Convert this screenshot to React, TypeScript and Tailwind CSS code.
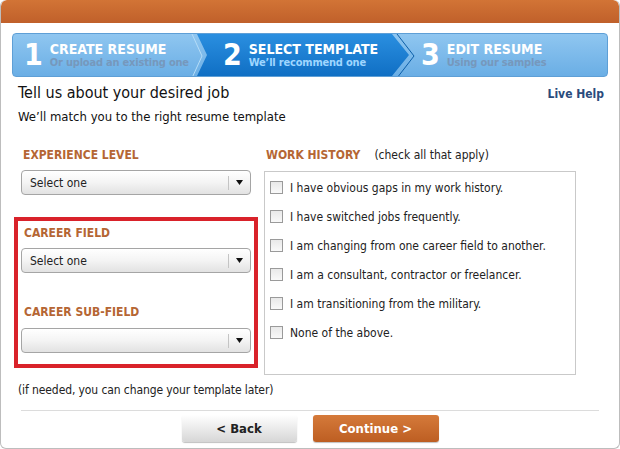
import React from 'react';

const FONT = 'font-["Tahoma","DejaVu_Sans_Condensed","DejaVu_Sans",sans-serif]';

const steps = [
  { n: '1', title: 'CREATE RESUME', sub: 'Or upload an existing one' },
  { n: '2', title: 'SELECT TEMPLATE', sub: 'We\u2019ll recommend one' },
  { n: '3', title: 'EDIT RESUME', sub: 'Using our samples' },
];

const workItems = [
  'I have obvious gaps in my work history.',
  'I have switched jobs frequently.',
  'I am changing from one career field to another.',
  'I am a consultant, contractor or freelancer.',
  'I am transitioning from the military.',
  'None of the above.',
];

const SelectBox: React.FC<{ value?: string }> = ({ value }) => (
  <div className="h-[25px] w-[230px] rounded-[4px] border border-[#a5a5a5] bg-gradient-to-b from-white via-[#f4f4f4] to-[#e2e2e2] flex items-center shadow-[inset_0_1px_0_#fff]">
    <span className="flex-1 pl-[8px] text-[12px] text-[#222] leading-none">{value}</span>
    <div className="w-px h-[14px] bg-[#c4c4c4]" />
    <div className="w-[21px] flex items-center justify-center">
      <svg width="7" height="5" viewBox="0 0 7 5">
        <path d="M0 0 H7 L3.5 5 Z" fill="#111" />
      </svg>
    </div>
  </div>
);

const Label: React.FC<{ children: React.ReactNode }> = ({ children }) => (
  <div className="text-[12px] font-bold text-[#b56634] leading-none pl-[2px] whitespace-nowrap">{children}</div>
);

const Step: React.FC<{ step: typeof steps[number]; active?: boolean }> = ({ step, active }) => (
  <div className="flex items-center gap-[7px] whitespace-nowrap">
    <span className="text-[30px] font-bold text-white leading-none">{step.n}</span>
    <div className="flex flex-col">
      <span className="text-[14px] font-bold text-white leading-[15px]">{step.title}</span>
      <span className={`text-[11px] font-bold leading-[12px] tracking-[-0.2px] ${active ? 'text-[#9fd6ff]' : 'text-[#7698bc]'}`}>{step.sub}</span>
    </div>
  </div>
);

export default function App() {
  return (
    <div className={`w-[620px] h-[449px] bg-white ${FONT} overflow-hidden`}>
      <div className="w-[620px] h-[449px] rounded-[6px] border-b border-x border-[#bdbdbd] flex flex-col overflow-hidden">
        <div className="h-[23px] shrink-0 bg-gradient-to-b from-[#d27436] to-[#c0602a] rounded-t-[6px]" />

        <div className="mx-[11px] mt-[10px] h-[44px] shrink-0 rounded-[4px] border border-[#5e9fd6] bg-gradient-to-b from-[#8fc6f0] to-[#6aaee5] flex relative overflow-hidden">
          <div className="w-[184px] pl-[11px] flex items-center">
            <Step step={steps[0]} />
          </div>
          <div className="w-[212px] -mr-[4px] pl-[26px] flex items-center bg-gradient-to-b from-[#2a8fe0] to-[#0f6fc4] [clip-path:polygon(0_0,195px_0,212px_50%,195px_100%,0_100%,10px_50%)]">
            <Step step={steps[1]} active />
          </div>
          <div className="flex-1 pl-[16px] flex items-center">
            <Step step={steps[2]} />
          </div>
          <svg className="absolute left-[178px] top-0" width="22" height="44" viewBox="0 0 22 44">
            <path d="M1 0 L11 22 L1 44" fill="none" stroke="#b5dcf7" strokeWidth="1" />
          </svg>
          <svg className="absolute left-[380px] top-0" width="22" height="44" viewBox="0 0 22 44">
            <path d="M4 0 L21 22 L4 44" fill="none" stroke="#0c5ea8" strokeWidth="1" />
          </svg>
        </div>

        <div className="px-[17px] pt-[6px] flex flex-col">
          <div className="flex items-start justify-between">
            <h1 className="text-[16px] text-[#111] leading-[20px]">Tell us about your desired job</h1>
            <a className="mt-[2px] mr-[-2px] text-[12px] font-bold text-[#2a4b7c]">Live Help</a>
          </div>
          <p className="mt-[5px] text-[13px] text-[#111] leading-[17px]">We’ll match you to the right resume template</p>

          <div className="mt-[24px] flex gap-[6px]">
            <div className="w-[244px] -ml-[4px] flex flex-col">
              <div className="pl-[7px]">
                <Label>EXPERIENCE LEVEL</Label>
                <div className="mt-[9px]">
                  <SelectBox value="Select one" />
                </div>
              </div>
              <div className="mt-[22px] h-[151px] border-[4px] border-[#d9222a] flex flex-col pl-[3px] pt-[6px]">
                <div className="pl-[1px]">
                  <Label>CAREER FIELD</Label>
                </div>
                <div className="mt-[9px]">
                  <SelectBox value="Select one" />
                </div>
                <div className="mt-[33px] pl-[1px]">
                  <Label>CAREER SUB-FIELD</Label>
                </div>
                <div className="mt-[10px]">
                  <SelectBox />
                </div>
              </div>
            </div>

            <div className="w-[312px] flex flex-col">
              <div className="flex items-baseline gap-[14px]">
                <Label>WORK HISTORY</Label>
                <span className="text-[12px] text-[#222] leading-none">(check all that apply)</span>
              </div>
              <div className="mt-[10px] h-[204px] border border-[#c9c9c9] pt-[8px] pl-[5px] flex flex-col gap-[14px]">
                {workItems.map((item) => (
                  <label key={item} className="flex items-center gap-[7px] h-[15px]">
                    <span className="w-[13px] h-[13px] border border-[#9a9a9a] bg-gradient-to-b from-[#e9e9e9] to-[#f9f9f9] shrink-0" />
                    <span className="text-[12px] text-[#222] leading-none">{item}</span>
                  </label>
                ))}
              </div>
            </div>
          </div>

          <p className="mt-[7px] text-[12px] tracking-[-0.1px] text-[#222] leading-[16px]">(if needed, you can change your template later)</p>
          <div className="mt-[12px] h-px bg-[#dcdcdc] mx-[3px]" />
          <div className="mt-[4px] flex justify-center gap-[16px]">
            <button className="w-[115px] h-[27px] rounded-[3px] bg-gradient-to-b from-white to-[#d6d6d6] shadow-[0_1px_1px_rgba(0,0,0,0.25)] text-[13px] font-bold text-[#222]">
              &lt; Back
            </button>
            <button className="w-[126px] h-[27px] rounded-[3px] bg-gradient-to-b from-[#d57a3a] to-[#bd5e22] shadow-[0_1px_1px_rgba(0,0,0,0.25)] text-[13px] font-bold text-white">
              Continue &gt;
            </button>
          </div>
        </div>
      </div>
    </div>
  );
}
